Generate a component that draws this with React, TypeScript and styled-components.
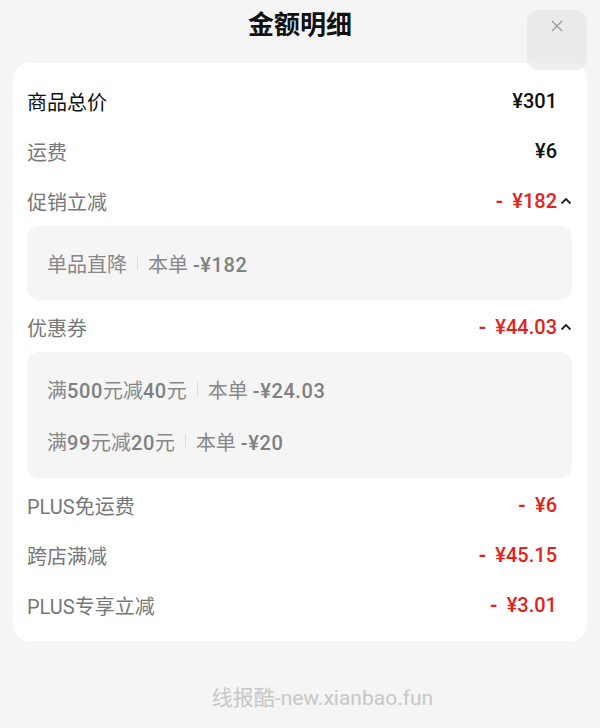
import React, { FC } from "react";
import styled, { createGlobalStyle } from "styled-components";

interface SubItem {
  name: string;
  amount: string;
}

interface Line {
  label: string;
  value: string;
  strong?: boolean;
  red?: boolean;
  open?: boolean;
  items?: SubItem[];
}

const lines: Line[] = [
  { label: "商品总价", value: "¥301", strong: true },
  { label: "运费", value: "¥6" },
  {
    label: "促销立减",
    value: "¥182",
    red: true,
    open: true,
    items: [{ name: "单品直降", amount: "本单 -¥182" }],
  },
  {
    label: "优惠券",
    value: "¥44.03",
    red: true,
    open: true,
    items: [
      { name: "满500元减40元", amount: "本单 -¥24.03" },
      { name: "满99元减20元", amount: "本单 -¥20" },
    ],
  },
  { label: "PLUS免运费", value: "¥6", red: true },
  { label: "跨店满减", value: "¥45.15", red: true },
  { label: "PLUS专享立减", value: "¥3.01", red: true },
];

// wrap latin/digit runs so they get the heavier number style
const withNums = (text: string) =>
  text.split(/([0-9.\-¥]+)/).map((part, i) =>
    /[0-9.\-¥]/.test(part) ? <Num key={i}>{part}</Num> : part
  );

const App: FC = () => {
  return (
    <Page>
      <GlobalStyle />
      <Header>
        <Title>金额明细</Title>
        <Close aria-label="close">
          <svg width="12" height="12" viewBox="0 0 12 12">
            <path d="M1 1L11 11M11 1L1 11" stroke="#999" strokeWidth="1.2" />
          </svg>
        </Close>
      </Header>
      <Card>
        {lines.map((line) => (
          <React.Fragment key={line.label}>
            <Row>
              <Label $strong={line.strong}>{line.label}</Label>
              <Value $red={line.red} $open={line.open}>
                {line.red && <Dash>-</Dash>}
                {line.value}
                {line.open && (
                  <Chevron width="12" height="10" viewBox="0 0 12 10">
                    <path d="M1.5 7.5L6 3L10.5 7.5" fill="none" stroke="#222" strokeWidth="1.8" />
                  </Chevron>
                )}
              </Value>
            </Row>
            {line.items && (
              <SubBox>
                {line.items.map((it) => (
                  <SubRow key={it.name}>
                    <span>{withNums(it.name)}</span>
                    <Divider />
                    <span>{withNums(it.amount)}</span>
                  </SubRow>
                ))}
              </SubBox>
            )}
          </React.Fragment>
        ))}
      </Card>
      <Footer>线报酷-new.xianbao.fun</Footer>
    </Page>
  );
};

export default App;

const GlobalStyle = createGlobalStyle`
  body {
    margin: 0;
    background: #f5f5f5;
    font-family: Roboto, "Noto Sans CJK SC", sans-serif;
  }
`;

const Page = styled.div`
  width: 600px;
  height: 728px;
  background: #f5f5f5;
  position: relative;
  overflow: hidden;
`;

const Header = styled.div`
  height: 63px;
  display: flex;
  justify-content: center;
  align-items: flex-start;
`;

const Title = styled.h1`
  margin: 8px 0 0;
  font-size: 26px;
  font-weight: 700;
  color: #111;
  line-height: 34px;
`;

const Close = styled.div`
  position: absolute;
  top: 10px;
  left: 527px;
  width: 60px;
  height: 60px;
  border-radius: 12px;
  background: rgba(225, 225, 225, 0.55);
  display: flex;
  justify-content: center;
  padding-top: 10px;
  box-sizing: border-box;
`;

const Card = styled.div`
  margin: 0 13px;
  background: #fff;
  border-radius: 16px;
  padding: 13px 15px 11px 14px;
`;

const Row = styled.div`
  height: 50px;
  display: flex;
  align-items: center;
  justify-content: space-between;
`;

const Label = styled.span<{ $strong?: boolean }>`
  font-size: 20px;
  color: ${(p) => (p.$strong ? "#111" : "#777")};
`;

const Value = styled.span<{ $red?: boolean; $open?: boolean }>`
  font-size: 20px;
  font-weight: 500;
  color: ${(p) => (p.$red ? "#e2231a" : "#111")};
  display: flex;
  align-items: center;
  margin-right: ${(p) => (p.$open ? "0" : "15px")};
`;

const Dash = styled.span`
  font-weight: 700;
  margin-right: 9px;
`;

const Chevron = styled.svg`
  margin-left: 3px;
`;

const SubBox = styled.div`
  background: #f5f5f5;
  border-radius: 12px;
  padding: 11px 20px 11px;
  margin-bottom: 2px;
`;

const SubRow = styled.div`
  height: 52px;
  display: flex;
  align-items: center;
  font-size: 20px;
  color: #888;
  white-space: pre;
`;

const Num = styled.span`
  font-weight: 500;
  letter-spacing: 0.6px;
  color: #808080;
`;

const Divider = styled.span`
  width: 1px;
  height: 14px;
  background: #ddd;
  margin: 0 10px;
`;

const Footer = styled.div`
  text-align: center;
  margin-top: 40px;
  font-size: 21px;
  color: #c8c8c8;
  padding-left: 45px;
`;
